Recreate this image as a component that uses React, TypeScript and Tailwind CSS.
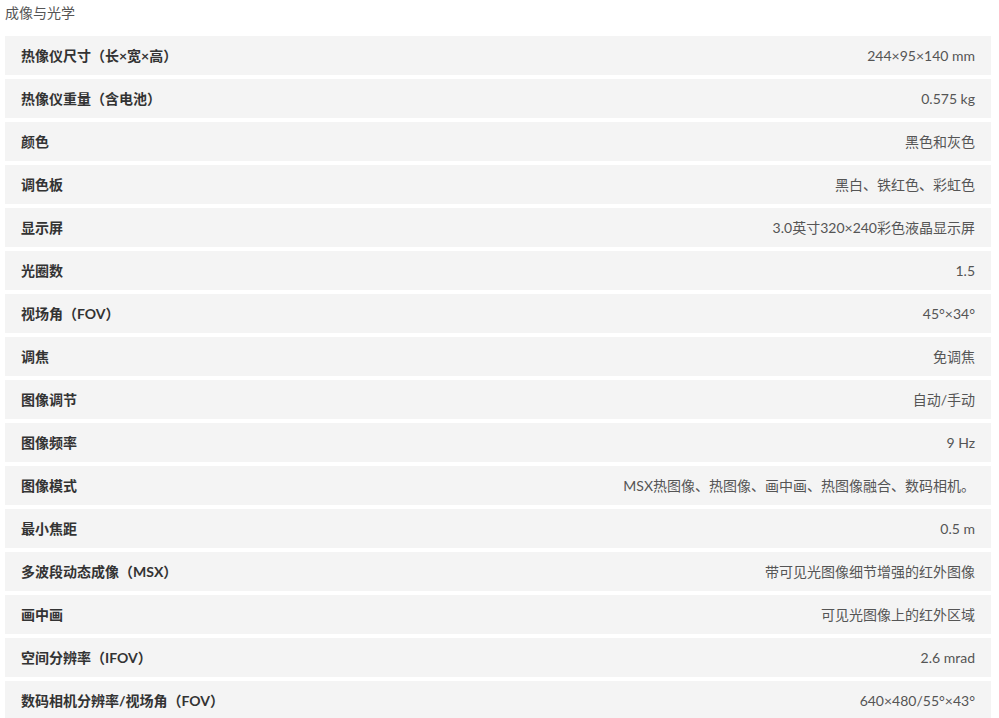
import React from "react";

const rows: [string, string][] = [
  ["热像仪尺寸（长×宽×高）", "244×95×140 mm"],
  ["热像仪重量（含电池）", "0.575 kg"],
  ["颜色", "黑色和灰色"],
  ["调色板", "黑白、铁红色、彩虹色"],
  ["显示屏", "3.0英寸320×240彩色液晶显示屏"],
  ["光圈数", "1.5"],
  ["视场角（FOV）", "45°×34°"],
  ["调焦", "免调焦"],
  ["图像调节", "自动/手动"],
  ["图像频率", "9 Hz"],
  ["图像模式", "MSX热图像、热图像、画中画、热图像融合、数码相机。"],
  ["最小焦距", "0.5 m"],
  ["多波段动态成像（MSX）", "带可见光图像细节增强的红外图像"],
  ["画中画", "可见光图像上的红外区域"],
  ["空间分辨率（IFOV）", "2.6 mrad"],
  ["数码相机分辨率/视场角（FOV）", "640×480/55°×43°"],
];

export default function App() {
  return (
    <div
      className="bg-white w-[999px] h-[718px] overflow-hidden pl-[5px]"
      style={{ fontFamily: '"Lato", "Noto Sans CJK SC", sans-serif' }}
    >
      <div className="h-[36px] pt-[3px] text-[14px] leading-[20px] text-[#555]">成像与光学</div>
      <div className="w-[986px] flex flex-col gap-[4px]">
        {rows.map(([k, v]) => (
          <div
            key={k}
            className="h-[39px] bg-[#f4f4f4] flex items-center justify-between px-[16px] text-[14px]"
          >
            <span className="font-bold text-[#333]">{k}</span>
            <span className="text-[#555]">{v}</span>
          </div>
        ))}
      </div>
    </div>
  );
}
